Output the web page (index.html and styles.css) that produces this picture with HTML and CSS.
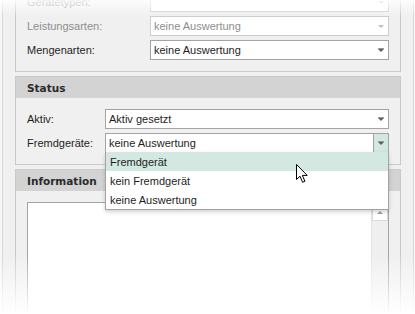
FILE: index.html
```html
<!DOCTYPE html>
<html lang="de">
<head>
<meta charset="utf-8">
<title>Filter</title>
<link rel="stylesheet" href="styles.css">
</head>
<body>
<div class="frame">
  <section class="group group-first">
    <div class="gbody">
      <div class="row disabled">
        <span class="lbl lbl-wide">Gerätetypen:</span>
        <div class="combo"><span class="val"></span><span class="btn"><i class="tri"></i></span></div>
      </div>
      <div class="row disabled">
        <span class="lbl lbl-wide">Leistungsarten:</span>
        <div class="combo"><span class="val">keine Auswertung</span><span class="btn"><i class="tri"></i></span></div>
      </div>
      <div class="row">
        <span class="lbl lbl-wide">Mengenarten:</span>
        <div class="combo"><span class="val">keine Auswertung</span><span class="btn"><i class="tri"></i></span></div>
      </div>
    </div>
  </section>

  <section class="group">
    <header class="ghead">Status</header>
    <div class="gbody">
      <div class="row">
        <span class="lbl">Aktiv:</span>
        <div class="combo"><span class="val">Aktiv gesetzt</span><span class="btn"><i class="tri"></i></span></div>
      </div>
      <div class="row">
        <span class="lbl">Fremdgeräte:</span>
        <div class="combo open">
          <span class="val">keine Auswertung</span><span class="btn btn-hot"><i class="tri"></i></span>
          <ul class="list">
            <li class="item item-hot">Fremdgerät</li>
            <li class="item">kein Fremdgerät</li>
            <li class="item">keine Auswertung</li>
          </ul>
        </div>
      </div>
    </div>
  </section>

  <section class="group group-last">
    <header class="ghead">Information</header>
    <div class="gbody gbody-memo">
      <div class="memo">
        <div class="memo-text"></div>
        <div class="vscroll"><span class="sbtn"><i class="tri tri-up"></i></span></div>
      </div>
    </div>
  </section>
</div>

<div class="fade-top"></div>
<div class="fade-bottom"></div>

<svg class="cursor" width="13" height="20" viewBox="0 0 13 20">
  <path d="M0.5 0.5 L0.5 15.5 L4 12.2 L6.6 18.3 L8.9 17.3 L6.4 11.4 L11.2 11.4 Z" fill="#ffffff" stroke="#000000" stroke-width="1" stroke-linejoin="miter"/>
</svg>
</body>
</html>
```

FILE: styles.css
```css
html, body {
  margin: 0;
  padding: 0;
}

body {
  width: 415px;
  height: 314px;
  overflow: hidden;
  position: relative;
  background: #f7f7f7;
  font-family: "Liberation Sans", Arial, sans-serif;
  font-size: 11px;
  color: #1e1e1e;
}

.frame {
  margin-left: 2px;
  width: 412px;
  box-sizing: border-box;
  height: 314px;
  overflow: hidden;
  border-left: 1px solid #d6d6d6;
  border-right: 1px solid #d6d6d6;
  background: #f0f0f0;
  padding: 0 12px;
  display: flex;
  flex-direction: column;
  gap: 4px;
}

.group {
  flex: none;
  border: 1px solid #cacaca;
  background: #f0f0f0;
}

.group-first {
  border-top: none;
  margin-top: -8px;
}

.ghead {
  height: 21px;
  background: #d3d3d3;
  display: flex;
  align-items: center;
  padding-left: 11px;
  font-family: "DejaVu Sans", Verdana, sans-serif;
  font-weight: bold;
  font-size: 10.5px;
  color: #2a2a2a;
}

.gbody {
  padding: 11px;
  display: flex;
  flex-direction: column;
  gap: 4px;
}

.group-first .gbody {
  padding-top: 0;
}

.row {
  display: flex;
  align-items: center;
  height: 20px;
}

.lbl {
  width: 78px;
  flex: none;
}

.lbl-wide {
  width: 123px;
}

.combo {
  position: relative;
  flex: 1;
  height: 20px;
  box-sizing: border-box;
  border: 1px solid #a3a3a3;
  background: #ffffff;
  display: flex;
  align-items: center;
}

.val {
  flex: 1;
  padding-left: 3px;
  white-space: nowrap;
}

.btn {
  width: 14px;
  height: 100%;
  display: flex;
  align-items: center;
  justify-content: center;
  border-left: 1px solid transparent;
}

.btn-hot {
  background: #d2e8e1;
  border-left-color: #a3a3a3;
}

.tri {
  display: block;
  width: 0;
  height: 0;
  border-left: 3px solid transparent;
  border-right: 3px solid transparent;
  border-top: 3px solid #606060;
  box-shadow: 0 -1px 0 0 #9a9a9a;
}

.disabled .lbl,
.disabled .val {
  color: #8e8e8e;
}

.disabled .combo {
  border-color: #cdcdcd;
}

.disabled .tri {
  border-top-color: #bdbdbd;
  box-shadow: none;
}

.list {
  position: absolute;
  top: 100%;
  left: -1px;
  right: -1px;
  margin: 0;
  padding: 0;
  list-style: none;
  background: #ffffff;
  border: 1px solid #a3a3a3;
  border-top: none;
  box-shadow: 0 2px 4px rgba(0, 0, 0, 0.18);
  z-index: 5;
}

.item {
  height: 19px;
  display: flex;
  align-items: center;
  padding-left: 4px;
}

.item-hot {
  background: #d2e8e1;
}

.group-last {
  flex: 1;
  border-bottom: none;
}

.gbody-memo {
  padding-bottom: 0;
}

.memo {
  height: 200px;
  border: 1px solid #a3a3a3;
  background: #ffffff;
  display: flex;
}

.memo-text {
  flex: 1;
}

.vscroll {
  width: 16px;
  background: #efefef;
  border-left: 1px solid #e4e4e4;
}

.sbtn {
  display: flex;
  align-items: center;
  justify-content: center;
  height: 18px;
  background: #ffffff;
  border: 1px solid #d8d8d8;
  box-sizing: border-box;
}

.tri-up {
  border-top: none;
  border-bottom: 3px solid #a0a0a0;
  box-shadow: none;
}

.fade-top {
  position: absolute;
  left: 0;
  top: 0;
  width: 100%;
  height: 16px;
  background: linear-gradient(to bottom, rgba(255, 255, 255, 0.85), rgba(255, 255, 255, 0));
  pointer-events: none;
}

.fade-bottom {
  position: absolute;
  left: 0;
  bottom: 0;
  width: 100%;
  height: 60px;
  background: linear-gradient(to bottom, rgba(255, 255, 255, 0), rgba(255, 255, 255, 1));
  pointer-events: none;
}

.cursor {
  position: absolute;
  left: 296px;
  top: 164px;
  z-index: 10;
}
```
